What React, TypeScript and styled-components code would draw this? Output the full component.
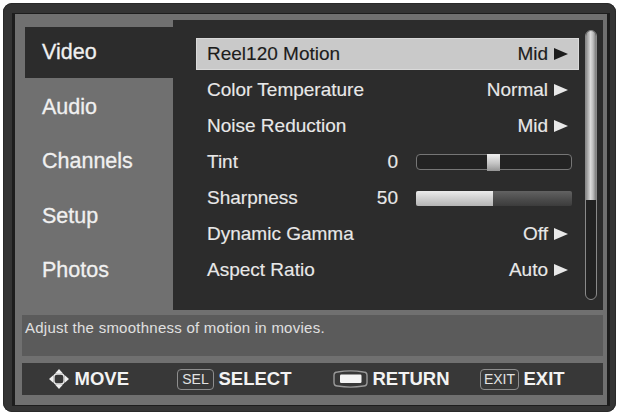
import React from "react";
import styled, { createGlobalStyle } from "styled-components";

const Global = createGlobalStyle`
  html, body {
    margin: 0;
    padding: 0;
    background: #ffffff;
  }
  body {
    font-family: "Liberation Sans", Arial, Helvetica, sans-serif;
  }
  * { box-sizing: border-box; }
`;

const Frame = styled.div`
  margin: 3px;
  width: 613px;
  height: 409px;
  background: #343434;
  border-radius: 9px;
  padding: 10px 6px 6px 9px;
  box-shadow: inset 0 0 0 1px #2a2a2a;
`;

const Panel = styled.div`
  height: 100%;
  background: #707070;
  border-style: solid;
  border-color: #1d1d1d;
  border-width: 1px 3px;
  padding: 6px 4px 10px 7px;
  display: flex;
  flex-direction: column;
`;

const Main = styled.div`
  display: flex;
  height: 290px;
`;

const Menu = styled.nav`
  width: 151px;
  padding: 7px 0 0 3px;
  display: flex;
  flex-direction: column;
  gap: 3.5px;
`;

const MenuItem = styled.div<{ $active?: boolean }>`
  height: 51px;
  display: flex;
  align-items: center;
  padding-left: 17px;
  font-size: 21.5px;
  color: #f0f0f0;
  -webkit-text-stroke: 0.3px #f0f0f0;
  background: ${(p) => (p.$active ? "#2c2c2c" : "transparent")};
`;

const Settings = styled.section`
  flex: 1;
  background: #2c2c2c;
  display: flex;
  padding: 10px 6px 10px 23px;
  gap: 6px;
`;

const RowList = styled.div`
  flex: 1;
  padding-top: 6px;
  display: flex;
  flex-direction: column;
`;

const Row = styled.div`
  height: 36px;
  padding: 2px 0;
  display: flex;
`;

const RowBar = styled.div<{ $selected?: boolean; $slider?: boolean }>`
  flex: 1;
  display: flex;
  align-items: center;
  gap: ${(p) => (p.$slider ? "18px" : "6px")};
  padding: 0 ${(p) => (p.$slider ? "7px" : "11px")} 0 11px;
  background: ${(p) => (p.$selected ? "#c9c9c9" : "transparent")};
  box-shadow: ${(p) => (p.$selected ? "inset 0 0 0 1px #dadada" : "none")};
  color: ${(p) => (p.$selected ? "#1c1c1c" : "#e8e8e8")};
  font-size: 19px;
  -webkit-text-stroke: 0.15px currentColor;
`;

const Label = styled.span`
  flex: 1;
`;

const Value = styled.span``;

const Arrow = styled.span`
  width: 0;
  height: 0;
  border-left: 14px solid currentColor;
  border-top: 6.5px solid transparent;
  border-bottom: 6.5px solid transparent;
`;

const Track = styled.div`
  position: relative;
  width: 156px;
  height: 16px;
  border: 1.5px solid #767676;
  border-radius: 4px;
  background: #232323;
`;

const Thumb = styled.div`
  position: absolute;
  top: -1.5px;
  bottom: -1.5px;
  width: 13px;
  background: linear-gradient(180deg, #f0f0f0 0%, #c4c4c4 55%, #949494 100%);
`;

const Level = styled.div`
  width: 156px;
  height: 15px;
  display: flex;
  border-radius: 2px;
  overflow: hidden;
  background: linear-gradient(180deg, #626262 0%, #4a4a4a 60%, #3c3c3c 100%);
`;

const LevelFill = styled.div`
  height: 100%;
  background: linear-gradient(180deg, #ececec 0%, #d2d2d2 45%, #b4b4b4 100%);
`;

const Scroll = styled.div`
  width: 12px;
  border: 1.5px solid #8a8a8a;
  border-radius: 6px;
  background: #222222;
  overflow: hidden;
`;

const ScrollThumb = styled.div`
  background: linear-gradient(90deg, #8c8c8c 0%, #dadada 45%, #bdbdbd 70%, #7a7a7a 100%);
`;

const Description = styled.div`
  margin-top: 5px;
  height: 41px;
  background: #5b5b5b;
  padding: 4px 3px;
  font-size: 15px;
  line-height: 18px;
  letter-spacing: 0.25px;
  color: #e0e0e0;
`;

const Footer = styled.footer`
  margin-top: 7px;
  height: 32px;
  background: #383838;
  display: grid;
  grid-template-columns: 129px 156px 147px auto;
  align-items: center;
  padding-left: 26px;
  color: #f3f3f3;
  font-weight: 700;
  font-size: 18.5px;
`;

const Hint = styled.div`
  display: flex;
  align-items: center;
  gap: 4.5px;
`;

const Key = styled.span<{ $w: number }>`
  width: ${(p) => p.$w}px;
  height: 21px;
  border: 1.5px solid #8e8e8e;
  border-radius: 4px;
  display: inline-flex;
  align-items: center;
  justify-content: center;
  font-size: 14px;
  font-weight: 400;
  color: #e2e2e2;
`;

const MoveIcon = () => (
  <svg width="22" height="22" viewBox="0 0 22 22">
    <rect x="6" y="6" width="10" height="10" rx="3" fill="none" stroke="#e8e8e8" strokeWidth="1.3" />
    <polygon points="11,1 7,5.5 15,5.5" fill="#f0f0f0" />
    <polygon points="11,21 7,16.5 15,16.5" fill="#f0f0f0" />
    <polygon points="1,11 5.5,7 5.5,15" fill="#f0f0f0" />
    <polygon points="21,11 16.5,7 16.5,15" fill="#f0f0f0" />
  </svg>
);

const ReturnIcon = () => (
  <svg width="35" height="20" viewBox="0 0 35 20">
    <path
      d="M4.5 3 Q17.5 0.8 30.5 3 Q34 3 34 6.5 V13.5 Q34 17 30.5 17 Q17.5 19.2 4.5 17 Q1 17 1 13.5 V6.5 Q1 3 4.5 3 Z"
      fill="none"
      stroke="#9a9a9a"
      strokeWidth="1.4"
    />
    <rect x="7" y="5.5" width="21.5" height="8.5" rx="1.2" fill="#f5f5f5" />
  </svg>
);

type Setting =
  | { kind: "choice"; label: string; value: string }
  | { kind: "center"; label: string; value: number; min: number; max: number }
  | { kind: "level"; label: string; value: number; max: number };

const settings: Setting[] = [
  { kind: "choice", label: "Reel120 Motion", value: "Mid" },
  { kind: "choice", label: "Color Temperature", value: "Normal" },
  { kind: "choice", label: "Noise Reduction", value: "Mid" },
  { kind: "center", label: "Tint", value: 0, min: -50, max: 50 },
  { kind: "level", label: "Sharpness", value: 50, max: 100 },
  { kind: "choice", label: "Dynamic Gamma", value: "Off" },
  { kind: "choice", label: "Aspect Ratio", value: "Auto" },
];

const menu = ["Video", "Audio", "Channels", "Setup", "Photos"];

const TRACK_W = 156;
const THUMB_W = 13;

function SettingRow({ s, selected }: { s: Setting; selected: boolean }) {
  if (s.kind === "choice") {
    return (
      <Row>
        <RowBar $selected={selected}>
          <Label>{s.label}</Label>
          <Value>{s.value}</Value>
          <Arrow />
        </RowBar>
      </Row>
    );
  }
  if (s.kind === "center") {
    const ratio = (s.value - s.min) / (s.max - s.min);
    const left = (TRACK_W - THUMB_W) * ratio - 1.5;
    return (
      <Row>
        <RowBar $selected={selected} $slider>
          <Label>{s.label}</Label>
          <Value>{s.value}</Value>
          <Track>
            <Thumb style={{ left }} />
          </Track>
        </RowBar>
      </Row>
    );
  }
  return (
    <Row>
      <RowBar $selected={selected} $slider>
        <Label>{s.label}</Label>
        <Value>{s.value}</Value>
        <Level>
          <LevelFill style={{ width: (TRACK_W * s.value) / s.max - 1 }} />
        </Level>
      </RowBar>
    </Row>
  );
}

export default function App() {
  return (
    <>
      <Global />
      <Frame>
        <Panel>
          <Main>
            <Menu>
              {menu.map((m, i) => (
                <MenuItem key={m} $active={i === 0}>
                  {m}
                </MenuItem>
              ))}
            </Menu>
            <Settings>
              <RowList>
                {settings.map((s, i) => (
                  <SettingRow key={s.label} s={s} selected={i === 0} />
                ))}
              </RowList>
              <Scroll>
                <ScrollThumb style={{ height: "63%" }} />
              </Scroll>
            </Settings>
          </Main>
          <Description>Adjust the smoothness of motion in movies.</Description>
          <Footer>
            <Hint>
              <MoveIcon />
              MOVE
            </Hint>
            <Hint>
              <Key $w={37}>SEL</Key>
              SELECT
            </Hint>
            <Hint>
              <ReturnIcon />
              RETURN
            </Hint>
            <Hint>
              <Key $w={39}>EXIT</Key>
              EXIT
            </Hint>
          </Footer>
        </Panel>
      </Frame>
    </>
  );
}
